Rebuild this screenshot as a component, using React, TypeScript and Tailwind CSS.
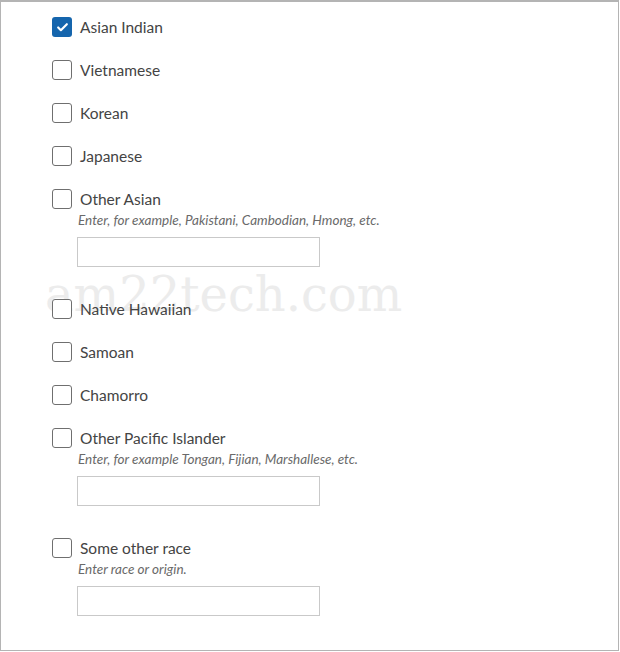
import { Check } from "lucide-react";

type Item = { label: string; checked?: boolean; hint?: string };

const items: Item[] = [
  { label: "Asian Indian", checked: true },
  { label: "Vietnamese" },
  { label: "Korean" },
  { label: "Japanese" },
  { label: "Other Asian", hint: "Enter, for example, Pakistani, Cambodian, Hmong, etc." },
  { label: "Native Hawaiian" },
  { label: "Samoan" },
  { label: "Chamorro" },
  { label: "Other Pacific Islander", hint: "Enter, for example Tongan, Fijian, Marshallese, etc." },
  { label: "Some other race", hint: "Enter race or origin." },
];

function Box({ checked }: { checked?: boolean }) {
  if (checked)
    return (
      <span className="flex size-[20px] shrink-0 items-center justify-center rounded-[3px] bg-[#1565ad]">
        <Check className="size-[13px] text-white" strokeWidth={4} />
      </span>
    );
  return <span className="size-[20px] shrink-0 rounded-[3px] border border-[#6f6f6f] bg-white" />;
}

export default function App() {
  return (
    <div className="relative h-[651px] w-[619px] border border-t-2 border-[#b4b4b4] bg-white font-['Lato',sans-serif] text-[#444]">
      <div className="pointer-events-none absolute left-[44px] top-[268px] select-none font-['DejaVu_Serif',serif] text-[48px] leading-none text-[#ececec]">
        am22tech.com
      </div>
      <div className="relative flex flex-col pl-[51px] pt-[15px]">
        {items.map((it) => (
          <div key={it.label} className={it.hint ? "mb-[32px]" : "mb-[23px]"}>
            <label className="flex h-[20px] items-center gap-[8px]">
              <Box checked={it.checked} />
              <span className="text-[15.5px] leading-[20px]">{it.label}</span>
            </label>
            {it.hint && (
              <div className="pl-[26px]">
                <p className="mt-[2px] text-[13.5px] italic leading-[18px] text-[#6a6a6a]">{it.hint}</p>
                <div className="ml-[-1px] mt-[8px] h-[30px] w-[243px] border border-[#c9c9c9] bg-white" />
              </div>
            )}
          </div>
        ))}
      </div>
    </div>
  );
}
